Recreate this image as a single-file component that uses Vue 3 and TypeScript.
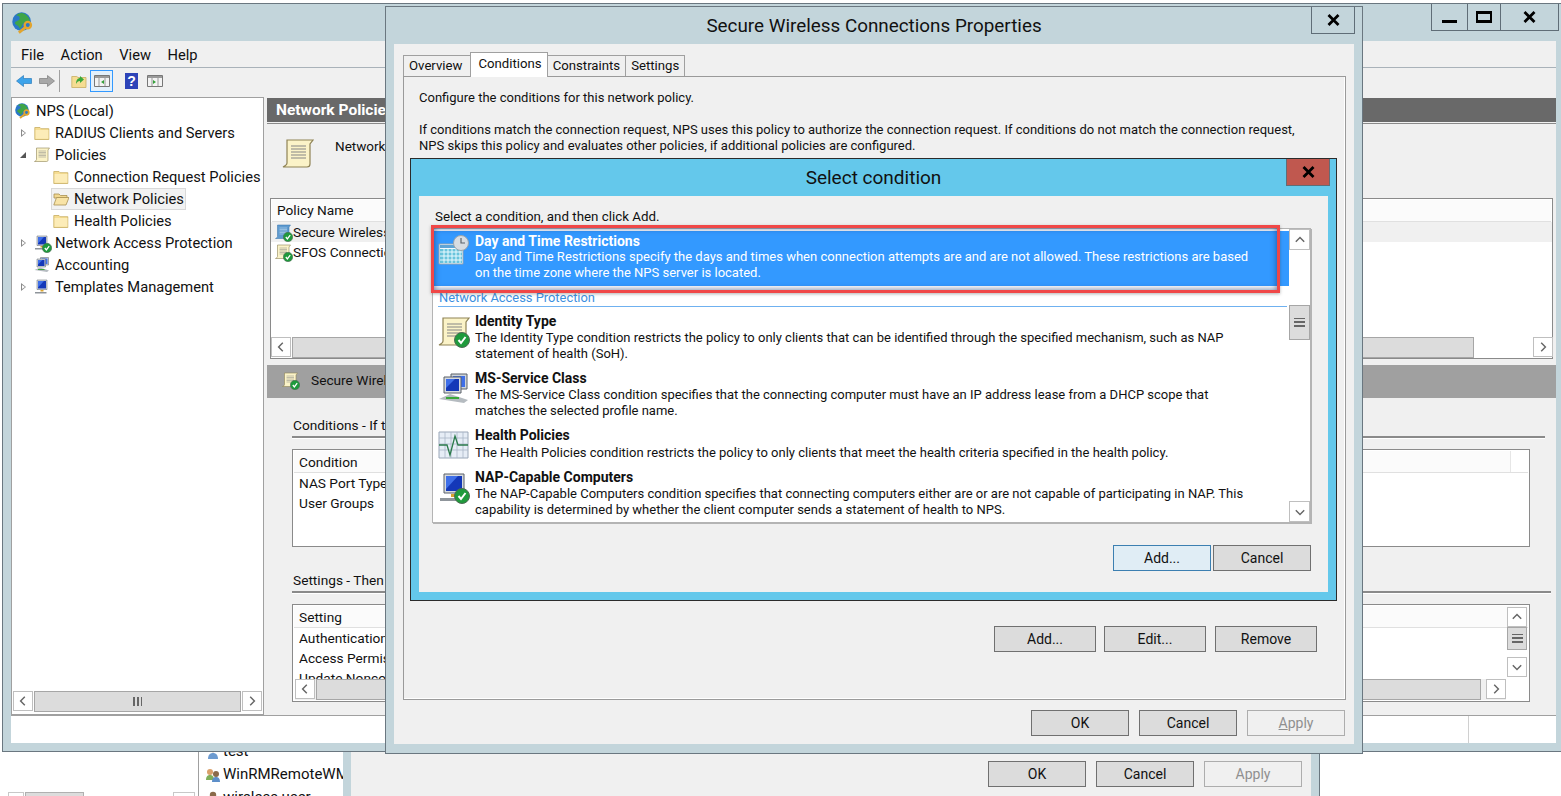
<script setup lang="ts">
interface TreeRow {
  label: string
  icon: string
  depth: number
  arrow?: 'closed' | 'open'
  badge?: boolean
  selected?: boolean
}

const menus = ['File', 'Action', 'View', 'Help']

const tree: TreeRow[] = [
  { label: 'NPS (Local)', icon: 'globe', depth: 0 },
  { label: 'RADIUS Clients and Servers', icon: 'folder', depth: 1, arrow: 'closed' },
  { label: 'Policies', icon: 'scroll', depth: 1, arrow: 'open' },
  { label: 'Connection Request Policies', icon: 'folder', depth: 2 },
  { label: 'Network Policies', icon: 'folder-open', depth: 2, selected: true },
  { label: 'Health Policies', icon: 'folder', depth: 2 },
  { label: 'Network Access Protection', icon: 'monitor', depth: 1, arrow: 'closed', badge: true },
  { label: 'Accounting', icon: 'network', depth: 1 },
  { label: 'Templates Management', icon: 'monitor', depth: 1, arrow: 'closed' },
]

const tabs = ['Overview', 'Conditions', 'Constraints', 'Settings']

const conditions = [
  {
    title: 'Identity Type',
    icon: 'scroll',
    badge: true,
    text: 'The Identity Type condition restricts the policy to only clients that can be identified through the specified mechanism, such as NAP statement of health (SoH).',
  },
  {
    title: 'MS-Service Class',
    icon: 'network',
    badge: false,
    text: 'The MS-Service Class condition specifies that the connecting computer must have an IP address lease from a DHCP scope that matches the selected profile name.',
  },
  {
    title: 'Health Policies',
    icon: 'health',
    badge: false,
    text: 'The Health Policies condition restricts the policy to only clients that meet the health criteria specified in the health policy.',
  },
  {
    title: 'NAP-Capable Computers',
    icon: 'monitor',
    badge: true,
    text: 'The NAP-Capable Computers condition specifies that connecting computers either are or are not capable of participating in NAP. This capability is determined by whether the client computer sends a statement of health to NPS.',
  },
]
</script>

<template>
  <div class="desktop">
    <svg class="defs" aria-hidden="true">
      <symbol id="chev" viewBox="0 0 10 10"><path d="M6.500 1.500 3 5l3.500 3.500" fill="none" stroke="#666" stroke-width="1.200" /></symbol>
      <symbol id="x" viewBox="0 0 13 12"><path d="M1.500 1 11.500 11M11.500 1 1.500 11" fill="none" stroke="#000" stroke-width="2.800" /></symbol>
      <symbol id="globe" viewBox="0 0 16 16">
        <circle cx="7" cy="7" r="6.800" fill="#2a78c8" />
        <path d="M3 2.500c2 0 3 1 2.500 2.500S3 6 2 8c1 2 3 1.500 3.500 4 2-1 1.500-3 3-4s3 0 4.500-2C12 3.500 10 1 7 .8 5 1 4 1.500 3 2.500Z" fill="#3fa548" />
        <circle cx="11.500" cy="9.500" r="2.300" fill="none" stroke="#e2a52e" stroke-width="1.700" />
        <path d="m10 11-5 4" stroke="#e2a52e" stroke-width="2" />
      </symbol>
      <symbol id="folder" viewBox="0 0 16 16">
        <path d="M.8 2.500h5.200l1.200 1.200h7.600v10.800H.8Z" fill="#f6dd92" stroke="#c8ad62" stroke-width=".8" />
        <path d="M1.600 5h12.800v8.700H1.600Z" fill="#fcecb8" />
      </symbol>
      <symbol id="folder-open" viewBox="0 0 16 16">
        <path d="M1 3h5l1.500 1.500H14V7H1Z" fill="#f2d890" stroke="#a89152" stroke-width=".8" />
        <path d="M3.500 6.500H16L13 14H.8Z" fill="#f8e3a6" stroke="#a89152" stroke-width=".8" />
      </symbol>
      <symbol id="scroll" viewBox="0 0 32 32">
        <path d="M5 2h26l-3 4v20c0 2-1 3-3 3H1c2-1 4-2 4-4Z" fill="#fbf3c8" stroke="#8f8355" stroke-width="1.200" />
        <path d="M9 8h15M9 11h15M9 14h15M9 17h15M9 20h15" stroke="#858585" />
      </symbol>
      <symbol id="scroll-blue" viewBox="0 0 32 32">
        <path d="M5 2h26l-3 4v20c0 2-1 3-3 3H1c2-1 4-2 4-4Z" fill="#5f9bd0" stroke="#2f6ea8" />
        <path d="M9 8h15M9 11h15M9 14h15M9 17h15M9 20h15" stroke="#cfe2f3" />
      </symbol>
      <symbol id="monitor" viewBox="0 0 32 32">
        <path d="M6 2h20v19H6Z" fill="#d6dadf" stroke="#5b6168" />
        <path d="M8 4h16v15H8Z" fill="#1438b8" />
        <path d="M8 4h12L8 17Z" fill="#3f6fe8" />
        <path d="M13 22h6v3H13Z" fill="#d9a32e" />
        <path d="M2 26h23v3H2Z" fill="#8f959b" />
      </symbol>
      <symbol id="network" viewBox="0 0 32 32">
        <path d="M13 1h16v15H13Z" fill="#cfd5da" stroke="#5b6168" />
        <path d="M15 3h12v11H15Z" fill="#3f6fe8" />
        <path d="M6 4h17v16H6Z" fill="#d6dadf" stroke="#5b6168" />
        <path d="M8 6h13v12H8Z" fill="#1438b8" />
        <path d="M8 6h9L8 15Z" fill="#3f6fe8" />
        <path d="M1 26 12 21l18 6-4 3Z" fill="#b5bbc0" />
        <path d="M8 25h13" stroke="#3aa83a" stroke-width="2" />
      </symbol>
      <symbol id="health" viewBox="0 0 32 32">
        <path d="M1 2h29v26H1Z" fill="#e6edf6" stroke="#9aa7b8" />
        <path d="M1 8h29M1 14h29M1 20h29M7 2v26M13 2v26M19 2v26M25 2v26" stroke="#a9b6c8" stroke-width=".8" />
        <path d="M1 15h8l3 10 5-19 3 9h10" fill="none" stroke="#2b7a4b" stroke-width="1.300" />
      </symbol>
      <symbol id="calendar" viewBox="0 0 32 32">
        <path d="M1 9h24v20H1Z" fill="#f3fbff" stroke="#8fa4b5" />
        <path d="M2 10h22v3H2Z" fill="#5fa5d6" />
        <path d="M2 14h22v14H2Z" fill="#69c4dc" />
        <path d="M2 17h22M2 21h22M2 25h22M6 14v14M10 14v14M14 14v14M18 14v14M22 14v14" stroke="#eafaff" />
        <circle cx="23" cy="8" r="7.500" fill="#d8dde2" stroke="#9aa5ae" />
        <path d="M23 3v5h4" fill="none" stroke="#5d656c" stroke-width="1.200" />
      </symbol>
      <symbol id="badge" viewBox="0 0 16 16">
        <circle cx="8" cy="8" r="7.500" fill="#1f9a3c" stroke="#4f6b55" />
        <path d="m4.500 8 2.500 3 4.500-6" fill="none" stroke="#fff" stroke-width="2" />
      </symbol>
      <symbol id="users" viewBox="0 0 16 16">
        <circle cx="5" cy="5" r="3" fill="#d9a06a" />
        <path d="M1 13c0-4 2-5 4-5s4 1 4 5Z" fill="#7fae5a" />
        <circle cx="11" cy="7" r="3" fill="#8a6a4a" />
        <path d="M7 15c0-4 2-5 4-5s4 1 4 5Z" fill="#5d8fc9" />
      </symbol>
      <symbol id="user" viewBox="0 0 16 16">
        <circle cx="8" cy="5" r="3.200" fill="#8a6a4a" />
        <path d="M3 15c0-4 2-6 5-6s5 2 5 6Z" fill="#6d9bd0" />
      </symbol>
      <symbol id="back" viewBox="0 0 16 16"><path d="M.5 8 7.500 2.500v3h8v5h-8v3Z" fill="#3da3ea" stroke="#1b6fb3" stroke-width=".6" /></symbol>
      <symbol id="forward" viewBox="0 0 16 16"><path d="M15.500 8 8.500 2.500v3h-8v5h8v3Z" fill="#a8a8a8" stroke="#6f6f6f" stroke-width=".6" /></symbol>
      <symbol id="up" viewBox="0 0 16 16">
        <path d="M.8 3.500h5l1.200 1h8v10H.8Z" fill="#f6dd92" stroke="#c8ad62" stroke-width=".8" />
        <path d="M5 11c0-4 2-6 4-6V3l4 3.500L9 10V8c-2 0-3 1-4 3Z" fill="#3aa83a" />
      </symbol>
      <symbol id="pane-left" viewBox="0 0 16 16">
        <path d="M.5 2.500h15v11H.5Z" fill="#f3f3f3" stroke="#777" />
        <path d="M1 3h14v2H1Z" fill="#9a9a9a" />
        <path d="M5 5v8M11 5v8" stroke="#999" />
        <path d="M10 7v4L7 9Z" fill="#35a03a" />
      </symbol>
      <symbol id="pane-right" viewBox="0 0 16 16">
        <path d="M.5 2.500h15v11H.5Z" fill="#f3f3f3" stroke="#777" />
        <path d="M1 3h14v2H1Z" fill="#9a9a9a" />
        <path d="M5 5v8M11 5v8" stroke="#999" />
        <path d="M6 7v4l3-2Z" fill="#35a03a" />
      </symbol>
    </svg>

    <!-- window behind, only its bottom edge shows -->
    <section class="back-win">
      <div class="back-side">
        <div class="back-hscroll">
          <span class="stub" />
          <span class="stub thumb" />
          <span class="stub far" />
        </div>
      </div>
      <ul class="back-list">
        <li class="back-row"><svg class="ico16"><use href="#user" /></svg>test</li>
        <li class="back-row"><svg class="ico16"><use href="#users" /></svg>WinRMRemoteWMIUsers</li>
        <li class="back-row"><svg class="ico16"><use href="#user" /></svg>wireless user</li>
      </ul>
      <div class="back-chrome" />
      <div class="back-body">
        <button class="btn">OK</button>
        <button class="btn">Cancel</button>
        <button class="btn disabled">Apply</button>
      </div>
    </section>

    <!-- NPS console -->
    <section class="mmc">
      <header class="mmc-title">
        <svg class="app-ico"><use href="#globe" /></svg>
        <div class="caption-btns">
          <button class="cap min"><span class="min-bar" /></button>
          <button class="cap max"><span class="max-box" /></button>
          <button class="cap close"><svg class="x"><use href="#x" /></svg></button>
        </div>
      </header>
      <div class="mmc-client">
        <nav class="menubar">
          <span v-for="m in menus" :key="m">{{ m }}</span>
        </nav>
        <div class="toolbar">
          <svg class="tool"><use href="#back" /></svg>
          <svg class="tool"><use href="#forward" /></svg>
          <span class="tool-sep" />
          <svg class="tool up"><use href="#up" /></svg>
          <span class="tool-on"><svg class="tool"><use href="#pane-left" /></svg></span>
          <span class="help">?</span>
          <svg class="tool"><use href="#pane-right" /></svg>
        </div>
        <div class="panes">
          <aside class="tree">
            <ul class="tree-list">
              <li
                v-for="row in tree"
                :key="row.label"
                class="tree-row"
                :class="'depth' + row.depth"
              >
                <span class="twist" :class="row.arrow" />
                <span class="tree-item" :class="{ selected: row.selected }">
                  <span class="tree-ico">
                    <svg class="ico16"><use :href="'#' + row.icon" /></svg>
                    <svg v-if="row.badge" class="mini-badge"><use href="#badge" /></svg>
                  </span>
                  <span class="tree-text">{{ row.label }}</span>
                </span>
              </li>
            </ul>
            <div class="hscroll">
              <span class="sb-btn"><svg class="chev"><use href="#chev" /></svg></span>
              <span class="sb-thumb"><i class="grip" /></span>
              <span class="sb-btn"><svg class="chev flip"><use href="#chev" /></svg></span>
            </div>
          </aside>

          <main class="result">
            <h2 class="result-head">Network Policies</h2>
            <div class="result-intro">
              <svg class="intro-ico"><use href="#scroll" /></svg>
              <p class="intro-text">Network policies</p>
            </div>
            <div class="policy-list">
              <div class="col-head">Policy Name</div>
              <div class="policy-row sel">
                <span class="tree-ico"><svg class="ico16"><use href="#scroll-blue" /></svg><svg class="mini-badge"><use href="#badge" /></svg></span>
                Secure Wireless Connections
              </div>
              <div class="policy-row">
                <span class="tree-ico"><svg class="ico16"><use href="#scroll" /></svg><svg class="mini-badge"><use href="#badge" /></svg></span>
                SFOS Connections
              </div>
              <div class="hscroll wide">
                <span class="sb-btn"><svg class="chev"><use href="#chev" /></svg></span>
                <span class="sb-thumb" />
                <span class="sb-btn"><svg class="chev flip"><use href="#chev" /></svg></span>
              </div>
            </div>
            <div class="detail-head">
              <span class="tree-ico"><svg class="ico16"><use href="#scroll" /></svg><svg class="mini-badge"><use href="#badge" /></svg></span>
              Secure Wireless Connections
            </div>
            <div class="detail">
              <div class="group-label"><span class="group-text">Conditions - If the following conditions are met:</span></div>
              <div class="mini-list">
                <div class="col-head">Condition<span class="col-rest" /></div>
                <div class="mini-row">NAS Port Type</div>
                <div class="mini-row">User Groups</div>
              </div>
              <div class="group-label second"><span class="group-text">Settings - Then the following settings are applied:</span></div>
              <div class="mini-list settings">
                <div class="col-head">Setting</div>
                <div class="mini-row">Authentication Method</div>
                <div class="mini-row">Access Permission</div>
                <div class="mini-row">Update Noncompliant Clients</div>
                <div class="vscroll">
                  <span class="sb-btn"><svg class="chev up"><use href="#chev" /></svg></span>
                  <span class="sb-thumb"><i class="grip-h" /></span>
                  <span class="sb-track" />
                  <span class="sb-btn"><svg class="chev down"><use href="#chev" /></svg></span>
                </div>
                <div class="hscroll low">
                  <span class="sb-btn"><svg class="chev"><use href="#chev" /></svg></span>
                  <span class="sb-thumb" />
                  <span class="sb-btn"><svg class="chev flip"><use href="#chev" /></svg></span>
                </div>
              </div>
            </div>
          </main>
        </div>
        <footer class="status"><span class="status-end" /></footer>
      </div>
    </section>

    <!-- policy properties -->
    <section class="props">
      <header class="props-title">
        <span class="props-caption">Secure Wireless Connections Properties</span>
        <button class="cap props-x"><svg class="x"><use href="#x" /></svg></button>
      </header>
      <div class="props-client">
        <div class="tabs">
          <span v-for="t in tabs" :key="t" class="tab" :class="{ active: t === 'Conditions' }">{{ t }}</span>
        </div>
        <div class="tab-page">
          <p class="page-line">Configure the conditions for this network policy.</p>
          <p class="page-para">If conditions match the connection request, NPS uses this policy to authorize the connection request. If conditions do not match the connection request, NPS skips this policy and evaluates other policies, if additional policies are configured.</p>
          <div class="page-actions">
            <button class="btn wide">Add...</button>
            <button class="btn wide">Edit...</button>
            <button class="btn wide">Remove</button>
          </div>
        </div>
        <div class="props-actions">
          <button class="btn">OK</button>
          <button class="btn">Cancel</button>
          <button class="btn disabled"><u>A</u>pply</button>
        </div>
      </div>
    </section>

    <!-- select condition dialog -->
    <section class="picker">
      <header class="picker-title">
        <span class="picker-caption">Select condition</span>
        <button class="cap picker-x"><svg class="x"><use href="#x" /></svg></button>
      </header>
      <div class="picker-client">
        <p class="picker-hint">Select a condition, and then click Add.</p>
        <div class="cond-box">
          <div class="cond-scroll">
            <div class="cond-item picked">
              <span class="cond-ico"><svg class="ico32"><use href="#calendar" /></svg></span>
              <div class="cond-body">
                <div class="cond-name">Day and Time Restrictions</div>
                <div class="cond-text">Day and Time Restrictions specify the days and times when connection attempts are and are not allowed. These restrictions are based on the time zone where the NPS server is located.</div>
              </div>
            </div>
            <div class="cond-group">Network Access Protection</div>
            <div v-for="c in conditions" :key="c.title" class="cond-item">
              <span class="cond-ico">
                <svg class="ico32"><use :href="'#' + c.icon" /></svg>
                <svg v-if="c.badge" class="big-badge"><use href="#badge" /></svg>
              </span>
              <div class="cond-body">
                <div class="cond-name">{{ c.title }}</div>
                <div class="cond-text">{{ c.text }}</div>
              </div>
            </div>
          </div>
          <div class="vscroll tall">
            <span class="sb-btn"><svg class="chev up"><use href="#chev" /></svg></span>
            <span class="sb-gap" />
            <span class="sb-thumb"><i class="grip-h" /></span>
            <span class="sb-track" />
            <span class="sb-btn"><svg class="chev down"><use href="#chev" /></svg></span>
          </div>
          <div class="red-mark" />
        </div>
        <div class="picker-actions">
          <button class="btn focus">Add...</button>
          <button class="btn">Cancel</button>
        </div>
      </div>
    </section>
  </div>
</template>

<style scoped>
.desktop {
  position: relative;
  width: 1561px;
  height: 796px;
  overflow: hidden;
  background: #fff;
  font-family: Roboto, "Noto Sans", sans-serif;
  color: #111;
}

.defs { position: absolute; width: 0; height: 0; }

ul { list-style: none; margin: 0; padding: 0; }
p, h2 { margin: 0; }

button { font: inherit; color: inherit; padding: 0; }

.ico16 { width: 16px; height: 16px; flex: none; }
.ico32 { width: 32px; height: 32px; }
.x { width: 13px; height: 12px; }

/* buttons */
.btn {
  width: 98px;
  height: 26px;
  background: #dcdcdc;
  border: 1px solid #707070;
  font-size: 14px;
}
.btn.wide { width: 102px; }
.btn.focus { border-color: #3c7fb1; background: #e0edf5; }
.btn.disabled { background: #f0f0f0; border-color: #adadad; color: #8f8f8f; }

/* scrollbars */
.hscroll {
  display: flex;
  height: 21px;
  gap: 1px;
  padding: 0 1px;
}
.vscroll { display: flex; flex-direction: column; width: 20px; }
.sb-btn {
  flex: none;
  width: 20px;
  height: 20px;
  box-sizing: border-box;
  background: #fff;
  border: 1px solid #bfbfbf;
  display: flex;
  align-items: center;
  justify-content: center;
}
.sb-thumb {
  flex: 1;
  background: #dcdcdc;
  border: 1px solid #a6a6a6;
  display: flex;
  align-items: center;
  justify-content: center;
}
.sb-track { flex: 1; background: #fff; }
.chev { width: 12px; height: 12px; }
.chev.flip { transform: scaleX(-1); }
.chev.up { transform: rotate(90deg); }
.chev.down { transform: rotate(-90deg); }
.grip {
  width: 9px;
  height: 9px;
  background: repeating-linear-gradient(90deg, #666 0 2px, transparent 2px 4px);
}
.grip-h {
  width: 11px;
  height: 9px;
  background: repeating-linear-gradient(0deg, #666 0 2px, transparent 2px 4px);
}

/* window behind */
.back-win {
  position: absolute;
  left: 1px;
  top: 740px;
  width: 1319px;
  height: 60px;
  display: flex;
}
.back-side { width: 197px; position: relative; border-right: 1px solid #a0a0a0; }
.back-hscroll {
  position: absolute;
  left: 7px;
  right: 3px;
  top: 52px;
  height: 8px;
  display: flex;
  gap: 1px;
}
.stub { width: 14px; background: #fff; border: 1px solid #c8c8c8; }
.stub.thumb { width: 57px; background: #dcdcdc; border-color: #b0b0b0; }
.stub.far { width: 20px; margin-left: auto; }
.back-list {
  width: 138px;
  padding: 0 0 0 6px;
  overflow: hidden;
  font-size: 15px;
  line-height: 23px;
  white-space: nowrap;
}
.back-row { display: flex; align-items: center; gap: 2px; height: 23px; }
.back-chrome { width: 8px; background: #c3d5db; }
.back-body {
  width: 960px;
  background: #f0f0f0;
  display: flex;
  gap: 10px;
  justify-content: flex-end;
  padding: 21px 9px 0 0;
  box-sizing: border-box;
}
.back-win::after {
  content: "";
  width: 8px;
  background: #c3d5db;
  border-right: 1px solid #6a7780;
}

/* console */
.mmc {
  position: absolute;
  left: 2px;
  top: 3px;
  width: 1566px;
  height: 749px;
  box-sizing: border-box;
  border: 1px solid #6a7780;
  background: #c3d5db;
  display: flex;
  flex-direction: column;
}
.mmc-title {
  height: 37px;
  flex: none;
  display: flex;
  justify-content: space-between;
  padding-left: 9px;
  box-sizing: border-box;
}
.app-ico { width: 22px; height: 22px; margin-top: 8px; }
.caption-btns { display: flex; margin-right: 8px; height: 27px; }
.cap {
  background: #c3d5db;
  border: 1px solid #5f6d77;
  display: flex;
  align-items: center;
  justify-content: center;
}
.cap.min { width: 36px; border-top: 0; border-right: 0; align-items: flex-end; padding-bottom: 7px; }
.cap.max { width: 33px; border-top: 0; border-right: 0; }
.cap.close { width: 59px; border-top: 0; }
.min-bar { width: 15px; height: 3px; background: #000; }
.max-box { width: 12px; height: 6px; border: 2px solid #000; border-width: 3px 2px; }

.mmc-client {
  width: 1545px;
  margin-left: 8px;
  height: 702px;
  display: flex;
  flex-direction: column;
  background: #f0f0f0;
}
.menubar {
  height: 27px;
  flex: none;
  display: flex;
  gap: 16.500px;
  padding: 1px 0 0 10px;
  box-sizing: border-box;
  align-items: center;
  font-size: 14.700px;
  border-bottom: 1px solid #a9b2b9;
}
.toolbar {
  height: 29px;
  flex: none;
  display: flex;
  align-items: center;
  padding: 0 0 3px 5px;
  box-sizing: border-box;
}
.tool { width: 16px; height: 16px; margin-right: 7px; }
.tool-sep { width: 1px; height: 22px; background: #a0a0a0; margin: 0 11px 0 -3px; }
.tool.up { margin-right: 3px; }
.tool-on {
  width: 23px;
  height: 22px;
  box-sizing: border-box;
  border: 1px solid #3399ff;
  background: #e3f0fb;
  display: flex;
  align-items: center;
  justify-content: center;
  margin-right: 12px;
}
.tool-on .tool { margin: 0; }
.help {
  width: 13px;
  height: 16px;
  background: #2d43b8;
  color: #fff;
  font: 700 14px/16px "Liberation Sans", sans-serif;
  text-align: center;
  margin-right: 9px;
}

.panes { flex: 1; display: flex; gap: 3px; min-height: 0; }

/* tree */
.tree {
  width: 253px;
  flex: none;
  box-sizing: border-box;
  background: #fff;
  border: 1px solid #a0a0a0;
  display: flex;
  flex-direction: column;
  justify-content: space-between;
  padding-bottom: 2px;
}
.tree-list { padding-top: 2px; }
.tree-row {
  height: 22px;
  display: flex;
  align-items: center;
  white-space: nowrap;
  font-size: 14.700px;
}
.depth0 { padding-left: 1px; }
.depth0 .twist { display: none; }
.depth1 { padding-left: 5px; }
.depth2 { padding-left: 24px; }
.twist { width: 15px; height: 10px; flex: none; position: relative; }
.twist.closed::before {
  content: "";
  position: absolute;
  left: 4px;
  top: 1px;
  border: 4px solid transparent;
  border-left: 5px solid #8a8a8a;
}
.twist.closed::after {
  content: "";
  position: absolute;
  left: 5px;
  top: 3px;
  border: 2px solid transparent;
  border-left: 3px solid #fff;
}
.twist.open::before {
  content: "";
  position: absolute;
  left: 3px;
  top: 2px;
  border: 3px solid transparent;
  border-right-color: #555;
  border-bottom-color: #555;
}
.tree-item {
  display: flex;
  align-items: center;
  height: 22px;
  box-sizing: border-box;
  padding: 0 1px;
  border: 1px solid transparent;
}
.tree-item.selected { background: #f2f2f2; border-color: #d9d9d9; }
.tree-ico { position: relative; width: 16px; height: 16px; flex: none; display: inline-block; }
.mini-badge { position: absolute; right: -2px; bottom: -2px; width: 10px; height: 10px; }
.tree-text { margin-left: 5px; }

/* right pane */
.result { flex: 1; min-width: 0; display: flex; flex-direction: column; padding-top: 1px; }
.result-head {
  height: 24px;
  flex: none;
  box-sizing: border-box;
  background: #696969;
  color: #fff;
  font-size: 15.500px;
  font-weight: 700;
  line-height: 24px;
  padding: 0 0 0 9px;
  white-space: nowrap;
}
.result-intro {
  height: 75px;
  flex: none;
  box-sizing: border-box;
  border-top: 1px solid #8a8a8a;
  margin-top: 1px;
  display: flex;
  padding: 14px 0 0 15px;
}
.intro-ico { width: 32px; height: 32px; }
.intro-text { margin-left: 21px; width: 50px; height: 16px; overflow: hidden; font-size: 13.500px; white-space: nowrap; line-height: 16px; }
.policy-list {
  height: 161px;
  flex: none;
  margin: 0 3px;
  box-sizing: border-box;
  border: 1px solid #8a8a8a;
  background: #fff;
  display: flex;
  flex-direction: column;
  font-size: 13.700px;
  white-space: nowrap;
}
.col-head {
  height: 22px;
  flex: none;
  box-sizing: border-box;
  background: #fbfbfb;
  border-bottom: 1px solid #e0e0e0;
  margin: 1px 1px 0;
  padding-left: 5px;
  line-height: 21px;
  display: flex;
  justify-content: space-between;
}
.col-rest { width: 17px; border-left: 1px solid #e6e6e6; background: #fff; }
.policy-row { height: 20px; flex: none; display: flex; align-items: center; padding-left: 4px; gap: 1px; }
.policy-row.sel { background: #f0f0f0; }
.policy-row .tree-ico { margin-right: 1px; }
.hscroll.wide { margin-top: auto; padding: 0; }
.hscroll.wide .sb-thumb { flex: none; width: 1180px; }
.hscroll.wide .sb-btn:last-child { margin-left: 58px; }
.detail-head {
  height: 33px;
  flex: none;
  margin-top: 6px;
  background: #a0a0a0;
  display: flex;
  align-items: center;
  gap: 13px;
  padding: 0 0 3px 15px;
  box-sizing: border-box;
  font-size: 13.700px;
  white-space: nowrap;
}
.detail { padding: 18px 0 0 25px; font-size: 13.700px; white-space: nowrap; }
.group-label {
  width: 1252px;
  height: 20px;
  padding-left: 1px;
  line-height: 18px;
  border-bottom: 2px solid #8a8a8a;
  box-shadow: 0 1px 0 #fff;
}
.group-label.second { width: 1258px; margin-top: 24px; }
.group-text { display: block; width: 92px; overflow: hidden; }
.mini-list {
  position: relative;
  width: 1238px;
  height: 98px;
  margin-top: 11px;
  box-sizing: border-box;
  border: 1px solid #8a8a8a;
  background: #fff;
  overflow: hidden;
}
.mini-row { height: 20px; line-height: 20px; padding-left: 6px; }
.mini-list .col-head { line-height: 23px; }
.settings .vscroll { position: absolute; right: 2px; top: 2px; height: 70px; }
.settings .vscroll .sb-thumb { flex: none; height: 21px; }
.hscroll.low {
  position: absolute;
  left: 2px;
  right: 23px;
  bottom: 1px;
  background: #f0f0f0;
  padding: 0;
}
.hscroll.low .sb-btn:last-child { margin-left: 4px; }

.status {
  height: 28px;
  flex: none;
  background: #fff;
  border-top: 1px solid #a0a0a0;
  box-sizing: border-box;
  display: flex;
  justify-content: flex-end;
}
.status-end { width: 87px; border-left: 1px solid #d0d0d0; }

/* properties */
.props {
  position: absolute;
  left: 385px;
  top: 6px;
  width: 978px;
  height: 748px;
  box-sizing: border-box;
  border: 1px solid #6a7780;
  background: #c3d5db;
  display: flex;
  flex-direction: column;
}
.props-title { height: 37px; flex: none; position: relative; display: flex; justify-content: center; padding-top: 7px; box-sizing: border-box; }
.props-caption { font-size: 18.850px; line-height: 24px; }
.cap.props-x { position: absolute; right: 7px; top: 0; height: 27px; width: 44px; border-top: 0; }
.props-client {
  margin: 0 8px 9px;
  flex: 1;
  background: #f0f0f0;
  padding: 8px 8px 0 9px;
  display: flex;
  flex-direction: column;
}
.tabs { display: flex; align-items: flex-end; height: 24px; font-size: 13.200px; }
.tab {
  height: 21px;
  line-height: 19px;
  box-sizing: border-box;
  border: 1px solid #a0a0a0;
  border-bottom: 0;
  padding: 0 5px;
  margin-right: -1px;
  background: #f0f0f0;
}
.tab:first-child { padding-right: 8px; }
.tab.active {
  height: 25px;
  background: #fff;
  position: relative;
  z-index: 1;
  margin-bottom: -1px;
  padding: 0 5px 0 7px;
  line-height: 21px;
}
.tab-page {
  height: 624px;
  box-sizing: border-box;
  border: 1px solid #9a9a9a;
  box-shadow: inset -10px -10px 0 -9px #fff;
  padding: 13px 46px 0 15px;
  display: flex;
  flex-direction: column;
  font-size: 13px;
}
.page-line { line-height: 16px; }
.page-para { line-height: 16px; margin-top: 16px; }
.page-actions { display: flex; gap: 8px; justify-content: flex-end; margin: auto -18px 47px 0; }
.page-actions .btn:last-child { margin-left: 1px; }
.props-actions { display: flex; gap: 10px; justify-content: flex-end; margin-top: 10px; padding-right: 1px; }

/* picker */
.picker {
  position: absolute;
  left: 410px;
  top: 158px;
  width: 927px;
  height: 443px;
  box-sizing: border-box;
  border: 1px solid #2b2b2b;
  background: #64c8eb;
  display: flex;
  flex-direction: column;
}
.picker-title { height: 37px; flex: none; position: relative; display: flex; justify-content: center; padding-top: 7px; box-sizing: border-box; }
.picker-caption { font-size: 19px; line-height: 24px; }
.cap.picker-x { position: absolute; right: 6px; top: 0; height: 27px; width: 44px; background: #c0584f; border-top: 0; }
.picker-client {
  flex: 1;
  margin: 0 8px 8px;
  background: #f0f0f0;
  padding: 13px 17px 0 13px;
  display: flex;
  flex-direction: column;
}
.picker-hint { font-size: 13.350px; line-height: 16px; padding-left: 3px; }
.cond-box {
  position: relative;
  margin-top: 3px;
  height: 295px;
  box-sizing: border-box;
  border: 1px solid #b4b4b4;
  box-shadow: 1px 1px 0 #b4b4b4;
  background: #fff;
  display: flex;
  font-size: 13px;
  line-height: 16px;
}
.cond-scroll { flex: 1; min-width: 0; padding: 2px 0 0 1px; }
.cond-item { display: flex; height: 57px; overflow: hidden; }
.cond-item:nth-child(5) { height: 42px; }
.cond-ico { position: relative; width: 41px; flex: none; padding: 4px 0 0 4px; box-sizing: border-box; }
.big-badge { position: absolute; left: 20px; top: 20px; width: 16px; height: 16px; }
.cond-body { flex: 1; padding: 1px 30px 0 0; }
.cond-name { font-weight: 700; font-size: 14px; margin-bottom: 1px; }
.cond-item:nth-child(5) .cond-name { margin-bottom: 2px; }
.cond-item.picked { height: 55px; margin-bottom: 3px; background: #3399ff; color: #fff; }
.picked .cond-body { padding-top: 2px; }
.picked .cond-name { margin-bottom: 0; }
.cond-group {
  height: 18px;
  line-height: 17px;
  color: #3b8fe0;
  font-size: 12.900px;
  margin-left: 4px;
  margin-right: 2px;
  padding-left: 1px;
  border-bottom: 1px solid #6fb1f0;
  box-sizing: border-box;
  margin-bottom: 5px;
}
.vscroll.tall { width: 21px; flex: none; }
.vscroll.tall .sb-btn { width: 21px; height: 21px; }
.sb-gap { height: 55px; flex: none; }
.vscroll.tall .sb-thumb { flex: none; height: 33px; }
.red-mark {
  position: absolute;
  left: -2px;
  top: -4px;
  width: 849px;
  height: 68px;
  box-sizing: border-box;
  border: 3px solid #f04747;
  box-shadow: inset 0 0 6px rgba(20, 50, 110, 0.7), 0 1px 3px rgba(60, 60, 60, 0.4);
}
.picker-actions { display: flex; gap: 2px; justify-content: flex-end; margin-top: 22px; }
</style>
